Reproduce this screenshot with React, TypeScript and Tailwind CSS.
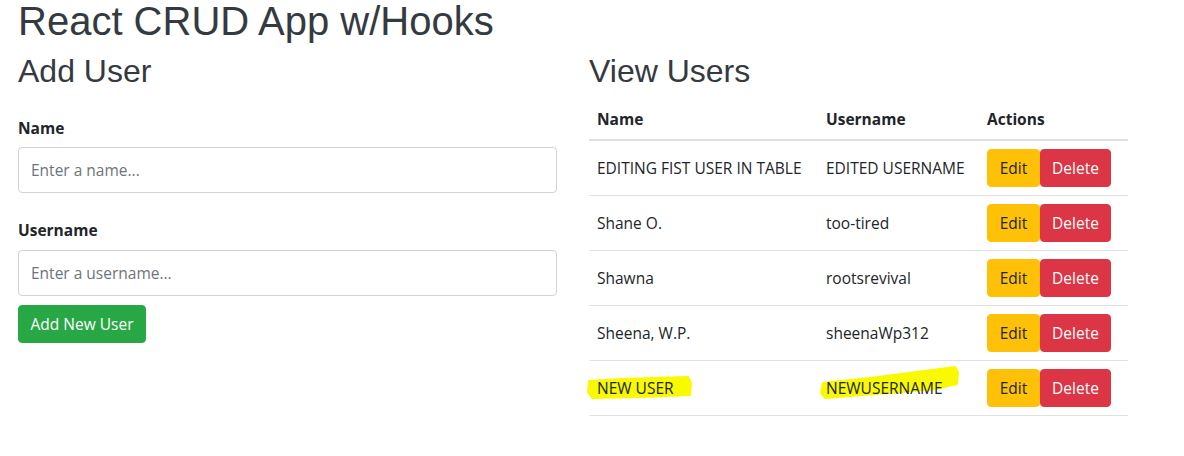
const users = [
  { id: 1, name: "EDITING FIST USER IN TABLE", username: "EDITED USERNAME" },
  { id: 2, name: "Shane O.", username: "too-tired" },
  { id: 3, name: "Shawna", username: "rootsrevival" },
  { id: 4, name: "Sheena, W.P.", username: "sheenaWp312" },
  { id: 5, name: "NEW USER", username: "NEWUSERNAME", marked: true },
];

// rough marker strokes someone drew over the last row
function Marker({ points }: { points: string }) {
  return (
    <svg
      className="pointer-events-none absolute left-0 top-0 overflow-visible"
      width="160"
      height="55"
      viewBox="0 0 160 55"
    >
      <polygon points={points} fill="#f9f900" stroke="#f9f900" strokeWidth="2" strokeLinejoin="round" />
    </svg>
  );
}

function AddUserForm() {
  return (
    <div>
      <h2 className="mb-2 font-['Liberation_Sans',Arial,sans-serif] text-[32px] leading-[38px] text-[#343a40]">
        Add User
      </h2>
      <form className="pt-[18px]" onSubmit={(e) => e.preventDefault()}>
        <div className="mb-[25px]">
          <label className="mb-[7px] block text-[15.5px] font-bold leading-6">Name</label>
          <input
            type="text"
            placeholder="Enter a name..."
            className="block h-[46px] w-full rounded-[4px] border border-[#ced4da] bg-white px-3 text-[15.5px] text-[#495057] outline-none placeholder:text-[#6c757d]"
          />
        </div>
        <div>
          <label className="mb-2 block text-[15.5px] font-bold leading-6">Username</label>
          <input
            type="text"
            placeholder="Enter a username..."
            className="block h-[46px] w-full rounded-[4px] border border-[#ced4da] bg-white px-3 text-[15.5px] text-[#495057] outline-none placeholder:text-[#6c757d]"
          />
        </div>
        <button
          type="submit"
          className="mt-[9px] h-[38px] w-[128px] rounded-[4px] border border-[#28a745] bg-[#28a745] text-[15.5px] leading-6 text-white"
        >
          Add New User
        </button>
      </form>
    </div>
  );
}

function UserTable() {
  return (
    <div>
      <h2 className="mb-2 font-['Liberation_Sans',Arial,sans-serif] text-[32px] leading-[38px] text-[#343a40]">
        View Users
      </h2>
      <table className="w-full table-fixed text-left text-[15.5px] leading-6">
        <thead>
          <tr>
            <th className="w-[229px] border-b-2 border-[#dee2e6] px-2 pt-[9px] pb-2 font-bold">Name</th>
            <th className="w-[161px] border-b-2 border-[#dee2e6] px-2 pt-[9px] pb-2 font-bold">Username</th>
            <th className="border-b-2 border-[#dee2e6] px-2 pt-[9px] pb-2 font-bold">Actions</th>
          </tr>
        </thead>
        <tbody>
          {users.map((u) => (
            <tr key={u.id}>
              <td className="relative border-b border-[#dee2e6] p-2 align-middle">
                {u.marked && (
                  <Marker points="0,20 33,18 99,16 102,22 101,34 51,36 3,37 -1,31" />
                )}
                <span className="relative whitespace-nowrap">{u.name}</span>
              </td>
              <td className="relative border-b border-[#dee2e6] p-2 align-middle">
                {u.marked && (
                  <Marker points="5,22 52,17 137,6 140,11 139,23 117,28 82,31 7,37 3,32" />
                )}
                <span className="relative whitespace-nowrap">{u.username}</span>
              </td>
              <td className="border-b border-[#dee2e6] p-2 align-middle">
                <div className="flex">
                  <button className="h-[38px] w-[53px] rounded-[4px] border border-[#ffc107] bg-[#ffc107] text-[#212529]">
                    Edit
                  </button>
                  <button className="h-[38px] w-[71px] rounded-[4px] border border-[#dc3545] bg-[#dc3545] text-white">
                    Delete
                  </button>
                </div>
              </td>
            </tr>
          ))}
        </tbody>
      </table>
    </div>
  );
}

export default function App() {
  return (
    <div className="min-h-screen bg-white pl-[18px] font-['Open_Sans',sans-serif] text-[#212529]">
      <h1 className="mb-[10px] font-['Liberation_Sans',Arial,sans-serif] text-[40px] leading-[42px] text-[#343a40]">
        React CRUD App w/Hooks
      </h1>
      <div className="grid w-[1110px] grid-cols-2 gap-8">
        <AddUserForm />
        <UserTable />
      </div>
    </div>
  );
}
